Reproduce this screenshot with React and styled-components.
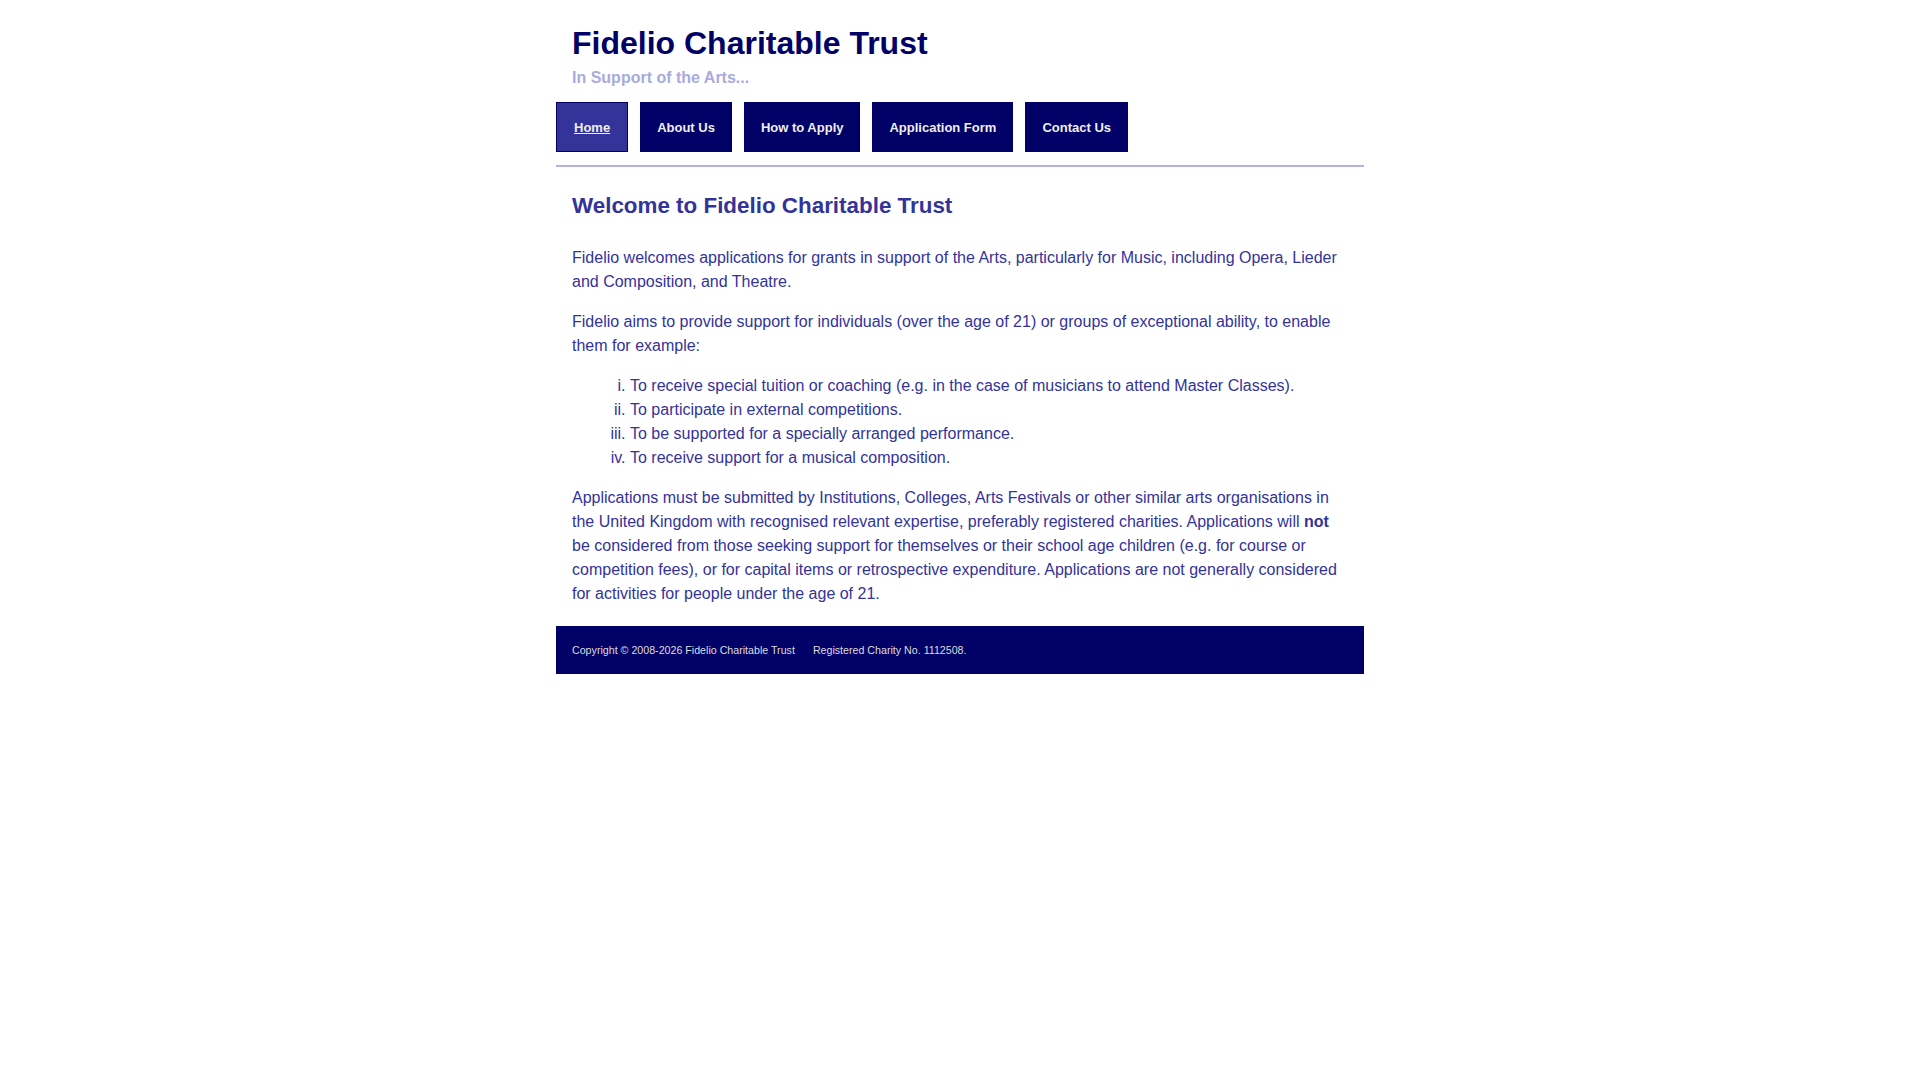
import React from "react";
import styled, { createGlobalStyle } from "styled-components";

const GlobalStyle = createGlobalStyle`
    body {
        margin: 0;
        background: #ffffff;
        font-family: "Liberation Sans", Arial, sans-serif;
    }
`

const navItems = [
    { label: "Home", active: true },
    { label: "About Us" },
    { label: "How to Apply" },
    { label: "Application Form" },
    { label: "Contact Us" },
];

export default function App() {
    return (
        <>
            <GlobalStyle />
            <Page>
                <Header>
                    <SiteTitle>Fidelio Charitable Trust</SiteTitle>
                    <Tagline>In Support of the Arts...</Tagline>
                </Header>

                <Nav>
                    {navItems.map((item) => (
                        <NavButton key={item.label} href="#" $active={item.active}>
                            {item.label}
                        </NavButton>
                    ))}
                </Nav>

                <Content>
                    <Heading>Welcome to Fidelio Charitable Trust</Heading>
                    <Para>
                        Fidelio welcomes applications for grants in support of the Arts, particularly for
                        Music, including Opera, Lieder and Composition, and Theatre.
                    </Para>
                    <Para>
                        Fidelio aims to provide support for individuals (over the age of 21) or groups of
                        exceptional ability, to enable them for example:
                    </Para>
                    <RomanList>
                        <li>To receive special tuition or coaching (e.g. in the case of musicians to attend Master Classes).</li>
                        <li>To participate in external competitions.</li>
                        <li>To be supported for a specially arranged performance.</li>
                        <li>To receive support for a musical composition.</li>
                    </RomanList>
                    <Para>
                        Applications must be submitted by Institutions, Colleges, Arts Festivals or other
                        similar arts organisations in the United Kingdom with recognised relevant expertise,
                        preferably registered charities. Applications will <strong>not</strong> be considered
                        from those seeking support for themselves or their school age children (e.g. for
                        course or competition fees), or for capital items or retrospective expenditure.
                        Applications are not generally considered for activities for people under the age of 21.
                    </Para>
                </Content>

                <Footer>
                    <span>Copyright © 2008-2026 Fidelio Charitable Trust</span>
                    <span>Registered Charity No. 1112508.</span>
                </Footer>
            </Page>
        </>
    );
}

const Page = styled.div`
    width: 808px;
    margin: 0 auto;
`

const Header = styled.header`
    padding: 24px 16px 0;
`

const SiteTitle = styled.h1`
    margin: 0;
    font-size: 32px;
    line-height: 38px;
    font-weight: bold;
    color: #000066;
`

const Tagline = styled.div`
    margin-top: 7px;
    font-size: 16px;
    line-height: 18px;
    font-weight: bold;
    color: #aaaadd;
`

const Nav = styled.nav`
    display: flex;
    gap: 12px;
    margin-top: 15px;
    padding-bottom: 13px;
    border-bottom: 2px solid #b3b3e0;
`

const NavButton = styled.a`
    display: flex;
    align-items: center;
    height: 50px;
    box-sizing: border-box;
    padding: 0 17px;
    font-size: 13px;
    font-weight: bold;
    color: #eeeeee;
    background: ${(p) => (p.$active ? "#333399" : "#000066")};
    border: ${(p) => (p.$active ? "1px solid #000066" : "none")};
    text-decoration: ${(p) => (p.$active ? "underline" : "none")};
`

const Content = styled.main`
    padding: 22px 16px 4px;
    color: #333399;
    font-size: 16px;
    line-height: 24px;
`

const Heading = styled.h2`
    margin: 0 0 23px;
    font-size: 22.4px;
    line-height: 34px;
    font-weight: bold;
    color: #333399;
`

const Para = styled.p`
    margin: 16px 0;
`

const RomanList = styled.ol`
    list-style-type: lower-roman;
    margin: 16px 0;
    padding-left: 58px;
`

const Footer = styled.footer`
    display: flex;
    gap: 18px;
    align-items: center;
    height: 48px;
    padding: 0 16px;
    background: #000066;
    color: #dddddd;
    font-size: 10.67px;
`
